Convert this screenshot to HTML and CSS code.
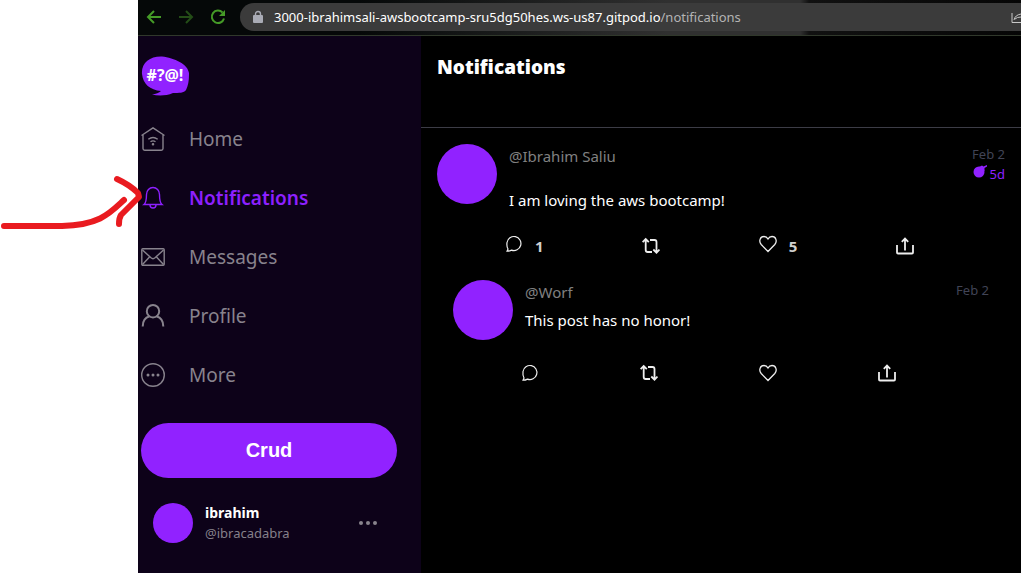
FILE: index.html
```html
<!DOCTYPE html>
<html lang="en">
<head>
<meta charset="utf-8">
<title>Notifications</title>
<link rel="stylesheet" href="styles.css">
</head>
<body>
<svg class="symbols" aria-hidden="true">
  <symbol id="comment" viewBox="0 0 18 18"><path d="M2 16.200L3 14Q1.500 11.500 2 7.500A7 7 0 1 1 6.500 15.100Q4.500 16.200 2 16.200Z" fill="none" stroke="currentColor" stroke-width="1.200"/></symbol>
  <symbol id="repost" viewBox="0 0 18 18"><path d="M.6 5.200L3.700 2L6.800 5.200M3.700 2.500V13Q3.700 15 5.700 15H10M8 3H12.500Q14.500 3 14.500 5V15M11.300 12.500L14.500 15.700L17.500 12.500" fill="none" stroke="currentColor" stroke-width="1.800"/></symbol>
  <symbol id="heart" viewBox="0 0 18 18"><path d="M9 16.500L2.200 9.500C-.5 6.500 1 1.500 5 1.500C7 1.500 8.300 2.700 9 4C9.700 2.700 11 1.500 13 1.500C17 1.500 18.500 6.500 15.800 9.500Z" fill="none" stroke="currentColor" stroke-width="1.300"/></symbol>
  <symbol id="share" viewBox="0 0 18 18"><path d="M1 8V15.500Q1 16.500 2 16.500H16Q17 16.500 17 15.500V8M9 13.500V2M5.800 4.800L9 1.600L12.200 4.800" fill="none" stroke="currentColor" stroke-width="1.800"/></symbol>
</svg>
<div class="frame">
  <div class="gutter">
    <svg class="arrow" viewBox="0 0 144 60" aria-hidden="true"><path d="M4 53H62C100 52 110 40 124 27M117 6Q130 12 138 20L139 24L121 42Q119 45 119 51" /></svg>
  </div>
  <div class="window">
    <header class="toolbar">
      <button class="tool" aria-label="Back"><svg viewBox="0 0 16 16"><path d="M15 8H2M8 2L2 8L8 14"/></svg></button>
      <button class="tool tool-off" aria-label="Forward"><svg viewBox="0 0 16 16"><path d="M1 8H14M8 2L14 8L8 14"/></svg></button>
      <button class="tool" aria-label="Reload"><svg viewBox="0 0 16 16"><path d="M12.500 3.500A6.200 6.200 0 1 0 14 9.500"/><path d="M15 1V7H9Z" class="solid"/></svg></button>
      <div class="address">
        <svg class="lock" viewBox="0 0 10 14"><rect y="5" width="10" height="8" rx="1" fill="currentColor"/><path d="M2.500 6V4A2.500 2.500 0 0 1 7.500 4V6" fill="none" stroke="currentColor" stroke-width="1.400"/></svg>
        <span class="url">3000-ibrahimsali-awsbootcamp-sru5dg50hes.ws-us87.gitpod.io<span class="path">/notifications</span></span>
        <svg class="send" viewBox="0 0 10 14"><path d="M1 3V12.500H10M3 10Q4 5 10 4M4 9Q6 7 10 7" fill="none" stroke="currentColor"/></svg>
      </div>
    </header>
    <div class="app">
      <aside class="sidebar">
        <svg class="logo" viewBox="0 0 48 40" role="img" aria-label="Cruddur">
          <path d="M1 18C0 7 9 0 21 .5C34 2 49 9 48 19C48 25 47 30 45 34C43 37 38 37 32 37C25 40 17 40 11 38.500C15 38 18 37 20 35C9 34 2 28 1 18Z" fill="#9122ff"/>
          <text x="24" y="25" text-anchor="middle">#?@!</text>
        </svg>
        <nav class="nav">
          <a href="#"><svg viewBox="0 0 24 24"><path d="M.5 8.500L12 .8L23.500 8.500M2 8V21.500Q2 23.200 3.700 23.200H20.300Q22 23.200 22 21.500V8M7.300 12.300Q12 8.800 16.700 12.300M9.500 14.800Q12 13 14.500 14.800"/><circle class="solid" cx="12" cy="17.300" r=".6"/></svg>Home</a>
          <a href="#" class="active" aria-current="page"><svg viewBox="0 0 24 24"><path d="M3 18.500Q5.500 16.500 5.500 8.500A6.500 7 0 0 1 18.500 8.500Q18.500 16.500 21 18.500ZM9 19A3 3 0 0 0 15 19"/></svg>Notifications</a>
          <a href="#"><svg viewBox="0 0 24 24"><rect x=".8" y="3.800" width="22.400" height="16.400" rx="1"/><path d="M1.500 5L10 12.800Q12 14.500 14 12.800L22.500 5M1.500 19.500L8.500 12M22.500 19.500L15.500 12"/></svg>Messages</a>
          <a href="#"><svg class="bold" viewBox="0 0 24 24"><circle cx="12" cy="7.200" r="6.200"/><path d="M1.700 22.500C1.700 17 4.500 13.500 8.500 12.300M22.300 22.500C22.300 17 19.500 13.500 15.500 12.300"/></svg>Profile</a>
          <a href="#"><svg viewBox="0 0 24 24"><circle cx="12" cy="12" r="11.300"/><g class="solid"><circle cx="7" cy="12" r=".8"/><circle cx="12" cy="12" r=".8"/><circle cx="17" cy="12" r=".8"/></g></svg>More</a>
        </nav>
        <button class="crud">Crud</button>
        <div class="user">
          <span class="avatar avatar-small"></span>
          <div class="identity"><strong>ibrahim</strong><span>@ibracadabra</span></div>
          <button class="dots" aria-label="Account options"><svg viewBox="0 0 20 6"><circle cx="3" cy="3" r="2"/><circle cx="10" cy="3" r="2"/><circle cx="17" cy="3" r="2"/></svg></button>
        </div>
      </aside>
      <main class="feed">
        <div class="heading"><h1>Notifications</h1></div>
        <article class="post">
          <span class="avatar"></span>
          <div class="content">
            <div class="head">
              <a href="#" class="handle">@Ibrahim Saliu</a>
              <div class="meta"><time>Feb 2</time><span class="expires"><svg viewBox="0 0 16 14"><circle cx="7" cy="7" r="5.500"/><path d="M7 2L10 .5L11.500 1.500L15 0L15 1.500L12.500 3V6L9 6Z"/></svg>5d</span></div>
            </div>
            <p>I am loving the aws bootcamp!</p>
            <div class="actions">
              <button class="counted" aria-label="Reply"><svg><use href="#comment"/></svg><b>1</b></button>
              <button aria-label="Repost"><svg><use href="#repost"/></svg></button>
              <button class="counted" aria-label="Like"><svg><use href="#heart"/></svg><b>5</b></button>
              <button aria-label="Share"><svg><use href="#share"/></svg></button>
            </div>
          </div>
        </article>
        <article class="post reply">
          <span class="avatar"></span>
          <div class="content">
            <div class="head">
              <a href="#" class="handle">@Worf</a>
              <div class="meta"><time>Feb 2</time></div>
            </div>
            <p>This post has no honor!</p>
            <div class="actions">
              <button aria-label="Reply"><svg><use href="#comment"/></svg></button>
              <button aria-label="Repost"><svg><use href="#repost"/></svg></button>
              <button aria-label="Like"><svg><use href="#heart"/></svg></button>
              <button aria-label="Share"><svg><use href="#share"/></svg></button>
            </div>
          </div>
        </article>
      </main>
    </div>
  </div>
</div>
</body>
</html>
```
FILE: styles.css
```css
* { box-sizing: border-box; }
body { margin: 0; background: #fff; color: #fff; font-family: "Noto Sans", "Open Sans", sans-serif; font-size: 15px; line-height: 24px; }
button { border: 0; padding: 0; background: none; color: inherit; font: inherit; }
a { color: inherit; text-decoration: none; }
p, h1 { margin: 0; }
svg { display: block; flex: none; }
.symbols { position: absolute; width: 0; height: 0; }

.frame { display: flex; min-height: 100vh; }
.gutter { position: relative; flex: 0 0 138px; }
.arrow { position: absolute; z-index: 1; left: 0; top: 173px; width: 144px; height: 60px; fill: none; stroke: #e91b20; stroke-width: 6px; stroke-linecap: round; stroke-linejoin: round; }
.window { display: flex; flex: 1; flex-direction: column; min-width: 0; background: #000; }

.toolbar { display: flex; align-items: center; height: 36px; padding: 0 0 2px 8px; border-bottom: 1px solid #30382b; background: linear-gradient(90deg, #050808 0 25%, #303030 60% 75%, #111 76%, #060606); }
.tool { width: 16px; height: 16px; margin-right: 16px; color: #459b27; }
.tool svg { width: 16px; height: 16px; fill: none; stroke: currentColor; stroke-width: 2px; }
.tool .solid { fill: currentColor; stroke: none; }
.tool-off { color: #244d17; }
.tool:nth-child(3) { margin-right: 14px; }
.address { display: flex; flex: 1; align-items: center; min-width: 0; height: 28px; padding-left: 13px; border-radius: 14px 0 0 14px; background: #3b3b3b; }
.lock { width: 10px; height: 14px; margin-right: 11px; color: #a9abb5; }
.url { flex: 1; overflow: hidden; font-size: 13px; white-space: nowrap; }
.path { color: #b4b4b4; }
.send { width: 10px; height: 14px; color: #c8c8c8; }

.app { display: flex; flex: 1; }
.sidebar { flex: 0 0 283px; padding: 20px 24px 24px 3px; background: #0d0219; }
.logo { width: 48px; height: 40px; }
.logo text { fill: #fff; font: bold 16px "Open Sans", sans-serif; }
.nav { display: flex; flex-direction: column; gap: 35px; padding: 31px 0 36px; }
.nav a { display: flex; align-items: center; gap: 24px; color: #88838d; font-size: 19px; }
.nav svg { width: 24px; height: 24px; fill: none; stroke: currentColor; stroke-width: 1.4px; }
.nav .bold { stroke-width: 2px; }
.nav .solid { fill: currentColor; }
.nav .active { color: #8d20ff; font-weight: 600; }
.crud { width: 100%; height: 55px; padding-bottom: 2px; border-radius: 28px; background: #9122ff; font-family: "Liberation Sans", Arial, sans-serif; font-size: 20px; font-weight: bold; }
.user { display: flex; align-items: center; gap: 12px; padding: 24px 19px 0 12px; }
.avatar { flex: none; width: 60px; height: 60px; border-radius: 50%; background: #9122ff; }
.avatar-small { width: 40px; height: 40px; }
.identity { display: flex; flex: 1; flex-direction: column; font-size: 13px; line-height: 21px; }
.identity strong { font-size: 14px; font-weight: 700; }
.identity span { color: #85808a; }
.dots svg { width: 20px; height: 6px; fill: #88838d; }

.feed { flex: 1; min-width: 0; }
.heading { height: 92px; padding: 19px 16px; border-bottom: 1px solid #3c3c46; }
h1 { font-family: "Open Sans", sans-serif; font-size: 19px; font-weight: 800; line-height: 24px; }
.post { display: flex; gap: 12px; padding: 16px 16px 0; }
.content { flex: 1; min-width: 0; }
.head { display: flex; justify-content: space-between; margin-bottom: 4px; }
.handle { color: #808080; }
.meta { display: flex; flex-direction: column; align-items: flex-end; color: #414456; font-size: 13px; line-height: 20px; }
.expires { display: flex; align-items: center; gap: 2px; color: #8d20ff; }
.expires svg { width: 16px; height: 14px; margin-bottom: 4px; fill: #9122ff; }
.actions { display: flex; align-items: center; justify-content: space-between; margin: 20px 91px 0 -4px; }
.actions button { display: flex; align-items: center; gap: 12px; height: 28px; color: #eee; }
.actions svg { width: 18px; height: 18px; }
.actions .counted svg { margin-bottom: 4px; }
.actions b { color: #d0d0d0; }
.reply { padding: 20px 32px 24px; }
.reply .actions { margin-top: 27px; margin-right: 93px; }
```
